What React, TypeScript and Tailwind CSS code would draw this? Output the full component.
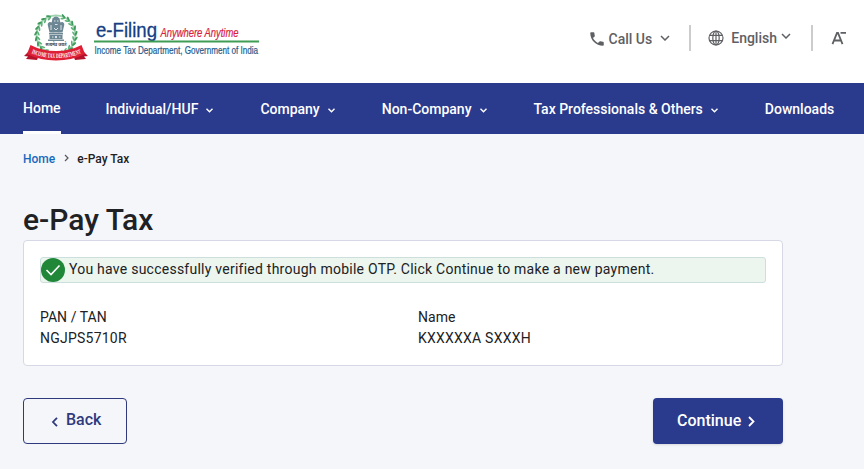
import React from 'react'

const navItems = [
  { label: 'Individual/HUF', menu: true },
  { label: 'Company', menu: true },
  { label: 'Non-Company', menu: true },
  { label: 'Tax Professionals & Others', menu: true },
  { label: 'Downloads', menu: false },
]

// leaves of the wreath, open at the top
const leaves = Array.from({ length: 21 }, (_, i) => 22 + i * 15.8)

function Chevron({ className, d = 'M1 1l4 4 4-4', box = '0 0 10 6', width = 1.5 }: { className: string; d?: string; box?: string; width?: number }) {
  return (
    <svg className={className} viewBox={box} fill="none" stroke="currentColor" strokeWidth={width}>
      <path d={d} />
    </svg>
  )
}

function Emblem() {
  return (
    <svg className="w-[66px] h-[48px] shrink-0" viewBox="0 0 66 48">
      <defs>
        <path id="ribbon" d="M7.500 40Q19 45 33 45T59.500 40" />
      </defs>
      <circle cx="33" cy="22" r="19.500" fill="none" stroke="#9fd3af" strokeWidth="2" />
      {leaves.map((a) => (
        <g key={a} transform={`rotate(${a} 33 22)`}>
          <ellipse cx="33" cy="1.800" rx="2.600" ry="1" fill="#3f9a5c" transform="rotate(28 33 1.8)" />
          <ellipse cx="33" cy="4.300" rx="2.400" ry="0.900" fill="#5fb27a" transform="rotate(-28 33 4.3)" />
        </g>
      ))}
      <g fill="#6d8794">
        <path d="M29.500 5.500q3.500-4 7 0l1 5-1.200 9h-6.600L28.500 10.500z" />
        <path d="M26.500 9q-2.500 1-1.500 4l1.500 6.500h4l-1-10zM39.500 9q2.500 1 1.500 4l-1.500 6.500h-4l1-10z" />
        <path d="M26 20h14v1.500H26zM26.500 22h13v4h-13zM25 26.500h16V28H25z" />
      </g>
      <path d="M31 8h1.500M34 8h1.500M32 11.500h2.500M28 12v5M38 12v5M31 15l2 2 2-2M29 24h1.500M36 24h1.500" stroke="#e8eff2" strokeWidth="0.900" fill="none" />
      <circle cx="33" cy="24" r="1.500" fill="#fff" stroke="#43687d" strokeWidth="0.600" />
      <text x="33" y="33" textAnchor="middle" fontFamily="Noto Sans, sans-serif" fontSize="4" fontWeight="700" fill="#3b4550">सत्यमेव जयते</text>
      <path d="M6 38L1 43l4 .5-2 2.500L14 47l2-5zM60 38l5 5-4 .5 2 2.500L52 47l-2-5z" fill="#b3122a" />
      <path d="M7.500 32Q19 38 33 38t25.500-6l3.500 9Q49 47.500 33 47.500T4 41z" fill="#df1f36" />
      <text fontFamily="Liberation Serif, serif" fontSize="6.600" fontWeight="700" fill="#fff">
        <textPath href="#ribbon" startOffset="1" textLength="51" lengthAdjust="spacingAndGlyphs">INCOME TAX DEPARTMENT</textPath>
      </text>
    </svg>
  )
}

function Logo() {
  return (
    <div className="flex">
      <Emblem />
      <svg className="w-[170px] h-[48px] ml-[5px] overflow-visible" viewBox="0 0 170 48" fontFamily="Liberation Sans, sans-serif">
        <text x="2" y="24" fontSize="19.500" fill="#153e84" stroke="#153e84" strokeWidth="0.300" textLength="61" lengthAdjust="spacingAndGlyphs">e-Filing</text>
        <text x="66.500" y="24" fontSize="12" fontStyle="italic" fill="#d8203c" stroke="#d8203c" strokeWidth="0.200" textLength="78" lengthAdjust="spacingAndGlyphs">Anywhere Anytime</text>
        <path d="M0 28.500h165" stroke="#3f9d54" strokeWidth="2" />
        <text x="0.500" y="40.500" fontSize="10.500" fill="#22598a" stroke="#22598a" strokeWidth="0.200" textLength="163.500" lengthAdjust="spacingAndGlyphs">Income Tax Department, Government of India</text>
      </svg>
    </div>
  )
}

function Header() {
  return (
    <header className="flex justify-between h-[83px] bg-white pl-[23px] pr-[17px] pt-[13px]">
      <Logo />
      <div className="flex items-center h-[50px] text-sm font-medium text-[#5f6064]">
        <svg className="w-[18px] h-[18px] mt-px" viewBox="0 0 24 24" fill="currentColor">
          <path d="M6.620 10.790c1.440 2.830 3.760 5.140 6.590 6.590l2.200-2.200c.27-.27.67-.36 1.020-.24 1.120.37 2.330.57 3.570.57.55 0 1 .45 1 1V20c0 .55-.45 1-1 1-9.390 0-17-7.610-17-17 0-.55.45-1 1-1h3.500c.55 0 1 .45 1 1 0 1.250.2 2.450.57 3.570.11.35.03.74-.25 1.020z" />
        </svg>
        <span className="ml-[3px] pt-0.5">Call Us</span>
        <Chevron className="w-[10px] h-[6px] ml-2" />
        <div className="w-0.5 h-[26px] bg-[#cccccc] ml-[19px]" />
        <svg className="w-4 h-4 ml-[17px]" viewBox="0 0 16 16" fill="none" stroke="currentColor" strokeWidth="1.200">
          <circle cx="8" cy="8" r="7" />
          <ellipse cx="8" cy="8" rx="3.200" ry="7" />
          <path d="M8 1v14M1.800 5.300h12.400M1.800 10.700h12.400" />
        </svg>
        <span className="ml-[7px]">English</span>
        <Chevron className="w-[10px] h-[6px] ml-1 mb-1" />
        <div className="w-0.5 h-[26px] bg-[#cccccc] ml-5" />
        <svg className="w-4 h-[14px] ml-[18px] mb-px" viewBox="0 0 16 14" fill="none" stroke="currentColor" strokeWidth="1.800">
          <path d="M1.500 13.200L6 2h1l4.500 11.200M3.500 9.500h6M9.500 1.900H15" />
        </svg>
      </div>
    </header>
  )
}

function App() {
  return (
    <div className="w-[864px] h-[469px] overflow-hidden bg-[#f5f6fa] font-['Roboto',sans-serif] text-[#202124]">
      <Header />

      <nav className="flex h-[51px] gap-[45px] bg-[#2a3a8d] pl-[23px] text-sm font-medium text-white whitespace-nowrap">
        <a className="flex items-center h-[51px] border-b-[3px] border-white pt-[2px]">Home</a>
        {navItems.map((item) => (
          <a key={item.label} className="flex items-center h-[51px] pt-px">
            {item.label}
            {item.menu && <Chevron className="w-[7px] h-[5px] ml-[8px] mr-[2px] mt-[3px]" d="M.5 .8l3 3 3-3" box="0 0 7 5" width={1.400} />}
          </a>
        ))}
      </nav>

      <div className="flex items-center h-[50px] pl-[23px] text-xs font-medium">
        <a className="text-[#1769bd]">Home</a>
        <Chevron className="w-[5px] h-[8px] ml-[9px] mr-[8px] mb-[2px] text-[#55575c]" d="M1 1l3 3-3 3" box="0 0 5 8" width={1.200} />
        <span>e-Pay Tax</span>
      </div>

      <main className="w-[783px] pl-[23px] pt-[15px]">
        <h1 className="h-[41px] text-[30px] leading-[41px] font-medium">e-Pay Tax</h1>

        <div className="h-[126px] bg-white border border-[#d6d8e5] rounded px-4 pt-4">
          <div className="flex items-center h-[26px] bg-[#ecf5ee] border border-[#ccdfdc] rounded-[3px] text-sm tracking-[0.245px]">
            <svg className="w-6 h-6 shrink-0 mr-1" viewBox="0 0 24 24" fill="none">
              <circle cx="12" cy="12" r="12" fill="#208739" />
              <path d="M5.500 12l4.500 4.500 8.500-9" stroke="#fff" strokeWidth="1.600" />
            </svg>
            <span className="pb-[2px]">You have successfully verified through mobile OTP. Click Continue to make a new payment.</span>
          </div>
          <div className="grid grid-cols-[378px_1fr] mt-6 text-sm leading-[21px] tracking-[0.23px]">
            <div>
              <p className="tracking-[0.05px]">PAN / TAN</p>
              <p>NGJPS5710R</p>
            </div>
            <div>
              <p className="tracking-[0.05px]">Name</p>
              <p>KXXXXXA SXXXH</p>
            </div>
          </div>
        </div>

        <div className="flex justify-between mt-8 font-medium text-base">
          <button className="flex items-center w-[104px] h-[46px] pl-[27px] pb-[2px] rounded border border-[#2f3a7d] text-[#2f3a7d]">
            <Chevron className="w-[7px] h-[10px] mr-[8px] mt-[3px]" d="M6 .8L2 5l4 4.200" box="0 0 7 10" width={1.800} />
            Back
          </button>
          <button className="flex items-center w-[130px] h-[46px] pl-6 rounded bg-[#2a3a8d] text-white shadow-sm">
            Continue
            <Chevron className="w-[7px] h-[11px] ml-[7px] mt-px" d="M1 1l4.500 4.500L1 10" box="0 0 7 11" width={1.800} />
          </button>
        </div>
      </main>
    </div>
  )
}

export default App
